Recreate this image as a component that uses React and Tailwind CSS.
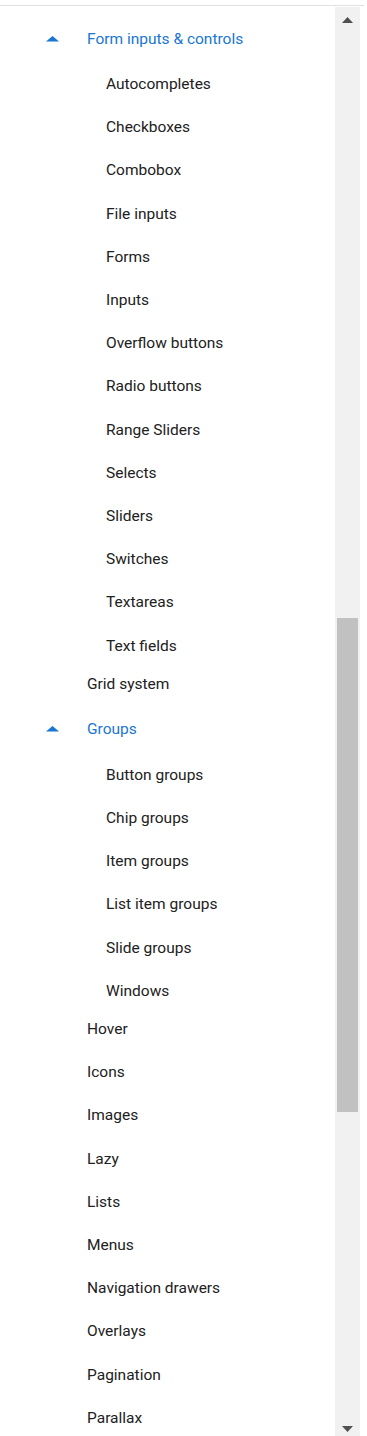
import React from "react";

const formItems = [
  "Autocompletes",
  "Checkboxes",
  "Combobox",
  "File inputs",
  "Forms",
  "Inputs",
  "Overflow buttons",
  "Radio buttons",
  "Range Sliders",
  "Selects",
  "Sliders",
  "Switches",
  "Textareas",
  "Text fields",
];

const groupItems = [
  "Button groups",
  "Chip groups",
  "Item groups",
  "List item groups",
  "Slide groups",
  "Windows",
];

const tailItems = [
  "Hover",
  "Icons",
  "Images",
  "Lazy",
  "Lists",
  "Menus",
  "Navigation drawers",
  "Overlays",
  "Pagination",
  "Parallax",
];

function GroupHeader({ label }) {
  return (
    <div className="flex h-[48px] shrink-0 items-center pl-[46px] text-[#1976d2]">
      <svg width="13" height="6" viewBox="0 0 13 6" className="shrink-0">
        <polygon points="0,5.5 6.5,0 13,5.5" fill="#1976d2" />
      </svg>
      <span className="ml-[28px] whitespace-nowrap">{label}</span>
    </div>
  );
}

function SubItem({ label }) {
  return (
    <div className="flex h-[43.2px] shrink-0 items-center pl-[106px] whitespace-nowrap text-[#212121]">
      {label}
    </div>
  );
}

function TopItem({ label }) {
  return (
    <div className="flex h-[43.2px] shrink-0 items-center pl-[87px] whitespace-nowrap text-[#212121]">
      {label}
    </div>
  );
}

export default function App() {
  return (
    <div
      className="flex h-[1436px] w-[367px] flex-col overflow-hidden bg-white text-[15.5px] leading-6"
      style={{ fontFamily: "Roboto, 'Noto Sans', sans-serif" }}
    >
      <div className="mt-[5px] h-px w-[364px] shrink-0 bg-[#e0e0e0]" />
      <div className="flex min-h-0 flex-1">
        <div className="flex min-w-0 flex-1 flex-col pt-[8.5px]">
          <GroupHeader label="Form inputs & controls" />
          <div className="-mb-[5px] flex flex-col">
            {formItems.map((t) => (
              <SubItem key={t} label={t} />
            ))}
          </div>
          <TopItem label="Grid system" />
          <GroupHeader label="Groups" />
          <div className="-mb-[5px] flex flex-col">
            {groupItems.map((t) => (
              <SubItem key={t} label={t} />
            ))}
          </div>
          {tailItems.map((t) => (
            <TopItem key={t} label={t} />
          ))}
        </div>
        <div className="mt-px flex w-[25px] shrink-0 flex-col items-center bg-[#f1f1f1] pt-[10px] pb-[4px]">
          <svg width="11" height="6" viewBox="0 0 11 6" className="shrink-0">
            <polygon points="0,6 5.5,0 11,6" fill="#505050" />
          </svg>
          <div className="mt-[595px] h-[494px] w-[21px] shrink-0 bg-[#c1c1c1]" />
          <div className="flex-1" />
          <svg width="11" height="6" viewBox="0 0 11 6" className="shrink-0">
            <polygon points="0,0 11,0 5.5,6" fill="#505050" />
          </svg>
        </div>
        <div className="w-[7px] shrink-0" />
      </div>
    </div>
  );
}
